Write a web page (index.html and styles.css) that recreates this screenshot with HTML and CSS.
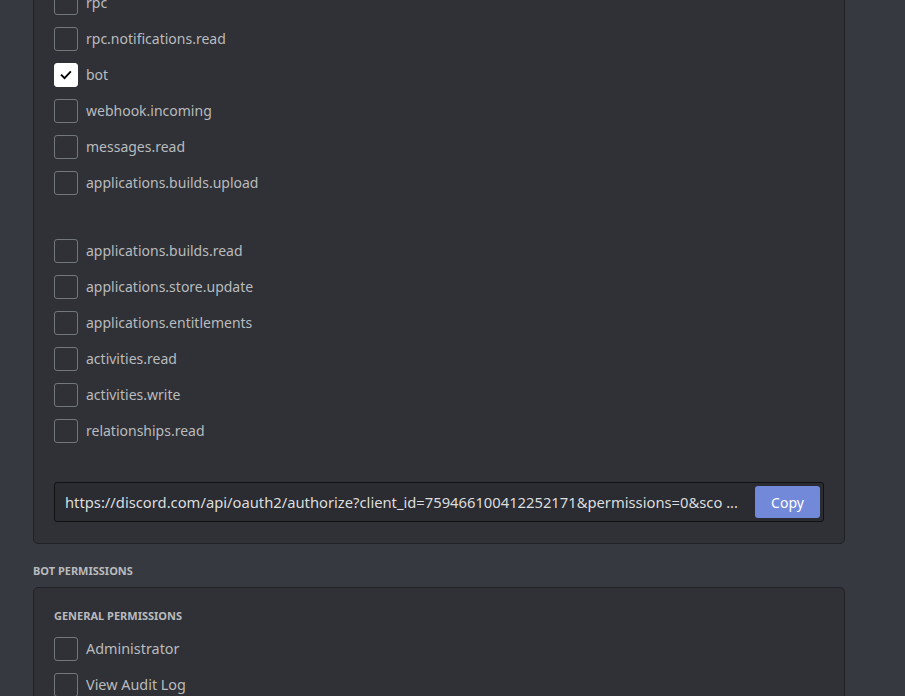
FILE: index.html
```html
<!DOCTYPE html>
<html>
<head>
<meta charset="utf-8">
<link rel="stylesheet" href="styles.css">
</head>
<body>
<main class="page">
  <section class="card scopes">
    <div class="group">
      <label class="row"><span class="box"></span><span class="name">rpc</span></label>
      <label class="row"><span class="box"></span><span class="name">rpc.notifications.read</span></label>
      <label class="row"><span class="box checked"><svg viewBox="0 0 24 24" width="24" height="24"><path d="M7.2 12.3 L10.4 15.4 L16.6 8.8" fill="none" stroke="#000" stroke-width="2" stroke-linecap="square"/></svg></span><span class="name">bot</span></label>
      <label class="row"><span class="box"></span><span class="name">webhook.incoming</span></label>
      <label class="row"><span class="box"></span><span class="name">messages.read</span></label>
      <label class="row"><span class="box"></span><span class="name">applications.builds.upload</span></label>
    </div>
    <div class="group second">
      <label class="row"><span class="box"></span><span class="name">applications.builds.read</span></label>
      <label class="row"><span class="box"></span><span class="name">applications.store.update</span></label>
      <label class="row"><span class="box"></span><span class="name">applications.entitlements</span></label>
      <label class="row"><span class="box"></span><span class="name">activities.read</span></label>
      <label class="row"><span class="box"></span><span class="name">activities.write</span></label>
      <label class="row"><span class="box"></span><span class="name">relationships.read</span></label>
    </div>
    <div class="url">
      <span class="url-text">https://discord.com/api/oauth2/authorize?client_id=759466100412252171&amp;permissions=0&amp;sco ...</span>
      <button class="copy">Copy</button>
    </div>
  </section>
  <h2 class="section-title">BOT PERMISSIONS</h2>
  <section class="card perms">
    <h3 class="sub-title">GENERAL PERMISSIONS</h3>
    <div class="group">
      <label class="row"><span class="box"></span><span class="name big">Administrator</span></label>
      <label class="row"><span class="box"></span><span class="name big">View Audit Log</span></label>
    </div>
  </section>
</main>
</body>
</html>
```

FILE: styles.css
```css
html, body {
  margin: 0;
  padding: 0;
  background: #36393f;
  height: 100%;
  overflow: hidden;
}
body {
  font-family: "Noto Sans", "Open Sans", sans-serif;
  color: #b9bbbe;
}
.page {
  padding-left: 33px;
  width: 812px;
  margin-top: -30px;
}
.card {
  background: #2f3136;
  border: 1px solid #202225;
  border-radius: 5px;
  padding: 20px 20px 21px 20px;
}
.group {
  display: flex;
  flex-direction: column;
  gap: 12px;
}
.group.second {
  margin-top: 44px;
}
.row {
  display: flex;
  align-items: center;
  height: 24px;
  gap: 8px;
}
.box {
  box-sizing: border-box;
  width: 24px;
  height: 24px;
  border: 1px solid #72767d;
  border-radius: 3px;
  flex: none;
  display: flex;
  align-items: center;
  justify-content: center;
}
.box.checked {
  background: #fff;
  border-color: #fff;
}
.box svg { display: block; }
.name {
  font-size: 14px;
  color: #b9bbbe;
  line-height: 18px;
}
.name.big {
  font-size: 14.4px;
}
.url {
  margin-top: 39px;
  display: flex;
  align-items: center;
  height: 40px;
  box-sizing: border-box;
  border: 1px solid #111214;
  border-radius: 3px;
  background: #2a2c31;
  padding: 3px 3px 3px 10px;
}
.url-text {
  flex: 1;
  font-size: 14.75px;
  color: #dcddde;
  white-space: nowrap;
  overflow: hidden;
}
.copy {
  flex: none;
  width: 65px;
  height: 32px;
  border: 0;
  border-radius: 3px;
  background: #7289da;
  color: #fff;
  font-family: inherit;
  font-size: 14px;
  padding: 0;
}
.section-title {
  margin: 19px 0 8px 0;
  font-size: 11px;
  font-weight: 700;
  line-height: 16px;
  color: #b9bbbe;
  text-transform: uppercase;
}
.sub-title {
  margin: 0 0 13px 0;
  font-size: 11px;
  font-weight: 700;
  line-height: 16px;
  color: #b9bbbe;
}
```
